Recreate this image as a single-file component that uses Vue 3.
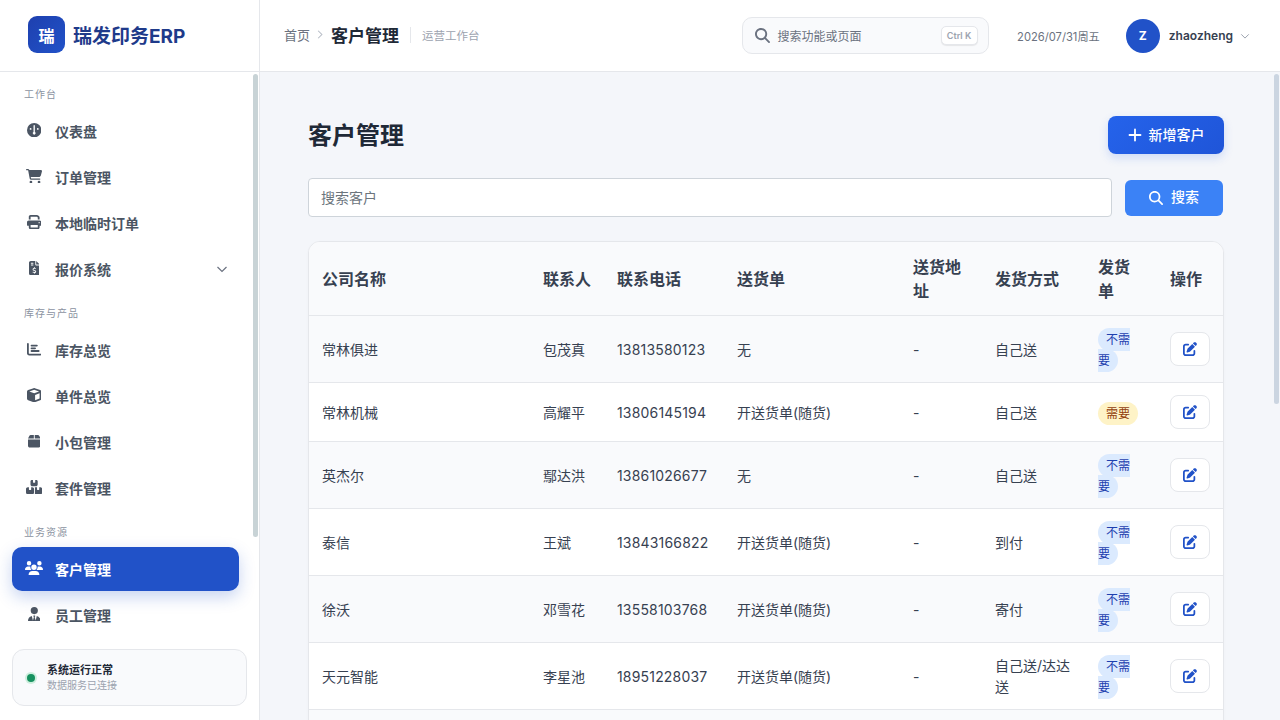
<script setup>
const icons = {
  gauge: { box: '0 0 512 512', d: 'M0 256a256 256 0 1 1 512 0A256 256 0 1 1 0 256zM280 96a24 24 0 0 0 -48 0V320a48 48 0 1 0 48 0zM160 210a32 32 0 1 0 -64 0 32 32 0 1 0 64 0zM416 210a32 32 0 1 0 -64 0 32 32 0 1 0 64 0z' },
  cart: { box: '0 0 576 512', d: 'M0 24C0 10.7 10.7 0 24 0H69.5c22 0 41.5 12.8 50.6 32h411c26.3 0 45.5 25 38.6 50.4l-41 152.3c-8.5 31.4-37 53.3-69.5 53.3H170.7l5.4 28.5c2.2 11.3 12.1 19.5 23.6 19.5H488c13.3 0 24 10.7 24 24s-10.7 24-24 24H199.7c-34.6 0-64.3-24.6-70.7-58.5L77.4 54.5c-.7-3.8-4-6.5-7.9-6.5H24C10.7 48 0 37.3 0 24zM128 464a48 48 0 1 1 96 0 48 48 0 1 1 -96 0zm336-48a48 48 0 1 1 0 96 48 48 0 1 1 0-96z' },
  print: { box: '0 0 512 512', d: 'M128 0C92.7 0 64 28.7 64 64v96h64V64H354.7L384 93.3V160h64V93.3c0-17-6.7-33.3-18.7-45.3L400 18.7C388 6.7 371.7 0 354.7 0H128zM384 352v32 64H128V384 368 352H384zm64 32h32c17.7 0 32-14.3 32-32V256c0-35.3-28.7-64-64-64H64c-35.3 0-64 28.7-64 64v96c0 17.7 14.3 32 32 32H64v64c0 35.3 28.7 64 64 64H384c35.3 0 64-28.7 64-64V384zM432 248a24 24 0 1 1 0 48 24 24 0 1 1 0-48z' },
  invoice: { box: '0 0 384 512', d: 'M64 0C28.7 0 0 28.7 0 64V448c0 35.3 28.7 64 64 64H320c35.3 0 64-28.7 64-64V160H256c-17.7 0-32-14.3-32-32V0H64zM256 0V128H384L256 0zM64 80c0-8.8 7.2-16 16-16h64c8.8 0 16 7.2 16 16s-7.2 16-16 16H80c-8.8 0-16-7.2-16-16zm0 64c0-8.8 7.2-16 16-16h64c8.8 0 16 7.2 16 16s-7.2 16-16 16H80c-8.8 0-16-7.2-16-16zm128 72c8.8 0 16 7.2 16 16v17.3c8.5 1.2 16.7 3.1 24.1 5.1c8.5 2.3 13.6 11 11.3 19.6s-11 13.6-19.6 11.3c-11.1-3-22-5.2-32.1-5.3c-8.4-.1-17.4 1.8-23.6 5.5c-5.7 3.4-8.1 7.3-8.1 12.8c0 3.7 1.3 6.5 7.3 10.1c6.9 4.1 16.6 7.1 29.2 10.9l.5 .1 0 0 0 0c11.3 3.4 25.3 7.6 36.3 14.6c12.1 7.6 22.4 19.7 22.7 38.2c.3 19.3-9.6 33.3-22.9 41.6c-7.7 4.8-16.4 7.6-25.1 9.1V440c0 8.8-7.2 16-16 16s-16-7.2-16-16V422.2c-11.2-2.1-21.7-5.7-30.9-8.9l0 0c-2.1-.7-4.2-1.4-6.2-2.1c-8.4-2.8-12.9-11.9-10.1-20.2s11.9-12.9 20.2-10.1c2.5 .8 4.8 1.6 7.1 2.4l0 0 0 0 0 0c13.6 4.6 24.6 8.4 36.3 8.7c9.1 .3 17.9-1.7 23.7-5.3c5.1-3.2 7.9-7.3 7.8-14c-.1-4.6-1.8-7.8-7.7-11.6c-6.8-4.3-16.5-7.4-29-11.2l-1.6-.5 0 0c-11-3.3-24.3-7.3-34.8-13.7c-12-7.2-22.6-18.9-22.7-37.3c-.1-19.4 10.8-32.8 23.8-40.5c7.5-4.4 15.8-7.2 24.1-8.7V232c0-8.8 7.2-16 16-16z' },
  chart: { box: '0 0 512 512', d: 'M32 32c17.7 0 32 14.3 32 32V400c0 8.8 7.2 16 16 16H480c17.7 0 32 14.3 32 32s-14.3 32-32 32H80c-44.2 0-80-35.8-80-80V64C0 46.3 14.3 32 32 32zm96 96c0-17.7 14.3-32 32-32l192 0c17.7 0 32 14.3 32 32s-14.3 32-32 32l-192 0c-17.7 0-32-14.3-32-32zm32 64H288c17.7 0 32 14.3 32 32s-14.3 32-32 32H160c-17.7 0-32-14.3-32-32s14.3-32 32-32zm0 96H416c17.7 0 32 14.3 32 32s-14.3 32-32 32H160c-17.7 0-32-14.3-32-32s14.3-32 32-32z' },
  cube: { box: '0 0 512 512', d: 'M234.5 5.7c13.9-5 29.1-5 43.1 0l192 68.6C495 83.4 512 107.5 512 134.6V377.4c0 27-17 51.2-42.5 60.3l-192 68.6c-13.9 5-29.1 5-43.1 0l-192-68.6C17 428.6 0 404.5 0 377.4V134.6c0-27 17-51.2 42.5-60.3l192-68.6zM256 66L82.3 128 256 190l173.7-62L256 66zm32 368.6l160-57.1v-188L288 246.6v188z' },
  box: { box: '0 0 448 512', d: 'M50.7 58.5L0 160H208V32H93.7C75.5 32 58.9 42.3 50.7 58.5zM240 160H448L397.3 58.5C389.1 42.3 372.5 32 354.3 32H240V160zm208 32H0V416c0 35.3 28.7 64 64 64H384c35.3 0 64-28.7 64-64V192z' },
  boxes: { box: '0 0 576 512', d: 'M248 0H208c-26.5 0-48 21.5-48 48V160c0 35.3 28.7 64 64 64H352c35.3 0 64-28.7 64-64V48c0-26.5-21.5-48-48-48H328V80c0 8.8-7.2 16-16 16H264c-8.8 0-16-7.2-16-16V0zM64 256c-35.3 0-64 28.7-64 64V448c0 35.3 28.7 64 64 64H224c35.3 0 64-28.7 64-64V320c0-35.3-28.7-64-64-64H184v80c0 8.8-7.2 16-16 16H120c-8.8 0-16-7.2-16-16V256H64zM352 512H512c35.3 0 64-28.7 64-64V320c0-35.3-28.7-64-64-64H472v80c0 8.8-7.2 16-16 16H408c-8.8 0-16-7.2-16-16V256H352c-15 0-28.8 5.1-39.7 13.8c4.9 10.4 7.7 22 7.7 34.2V464c0 12.2-2.8 23.8-7.7 34.2C323.2 506.9 337 512 352 512z' },
  users: { box: '0 0 640 512', d: 'M144 0a80 80 0 1 1 0 160A80 80 0 1 1 144 0zM512 0a80 80 0 1 1 0 160A80 80 0 1 1 512 0zM0 298.7C0 239.8 47.8 192 106.7 192h42.7c15.9 0 31 3.5 44.6 9.7c-1.3 7.2-1.9 14.7-1.9 22.3c0 38.2 16.8 72.5 43.3 96c-.2 0-.4 0-.7 0H21.3C9.6 320 0 310.4 0 298.7zM405.3 320c-.2 0-.4 0-.7 0c26.6-23.5 43.3-57.8 43.3-96c0-7.6-.7-15-1.9-22.3c13.6-6.3 28.7-9.7 44.6-9.7h42.7C592.2 192 640 239.8 640 298.7c0 11.8-9.6 21.3-21.3 21.3H405.3zM224 224a96 96 0 1 1 192 0 96 96 0 1 1 -192 0zM128 485.3C128 411.7 187.7 352 261.3 352H378.7C452.3 352 512 411.7 512 485.3c0 14.7-11.9 26.7-26.7 26.7H154.7c-14.7 0-26.7-11.9-26.7-26.7z' },
  tie: { box: '0 0 448 512', d: 'M96 128a128 128 0 1 0 256 0A128 128 0 1 0 96 128zm94.5 200.2l18.6 31L175.8 483.1l-36-146.9c-2-8.1-9.8-13.4-17.9-11.3C51.9 342.4 0 405.8 0 481.3c0 17 13.8 30.7 30.7 30.7H162.5c0 0 0 0 .1 0H168 280h5.5c0 0 0 0 .1 0H417.3c17 0 30.7-13.8 30.7-30.7c0-75.5-51.9-138.9-121.9-156.4c-8.1-2-15.9 3.3-17.9 11.3l-36 146.9L238.9 359.2l18.6-31c6.4-10.7-1.3-24.2-13.7-24.2H224 204.3c-12.4 0-20.1 13.6-13.7 24.2z' }
};

const searchPath = 'M416 208c0 45.9-14.9 88.3-40 122.7L502.6 457.4c12.5 12.5 12.5 32.8 0 45.3s-32.8 12.5-45.3 0L330.7 376c-34.4 25.2-76.8 40-122.7 40C93.1 416 0 322.9 0 208S93.1 0 208 0S416 93.1 416 208zM208 352a144 144 0 1 0 0-288 144 144 0 1 0 0 288z';
const editPath = 'M471.6 21.7c-21.9-21.9-57.3-21.9-79.2 0L362.3 51.7l97.9 97.9 30.1-30.1c21.9-21.9 21.9-57.3 0-79.2L471.6 21.7zm-299.2 220c-6.1 6.1-10.8 13.6-13.5 21.9l-29.6 88.8c-2.9 8.6-.6 18.1 5.8 24.6s15.9 8.7 24.6 5.8l88.8-29.6c8.2-2.7 15.7-7.4 21.9-13.5L437.7 172.3 339.7 74.3 172.4 241.7zM96 64C43 64 0 107 0 160V416c0 53 43 96 96 96H352c53 0 96-43 96-96V320c0-17.7-14.3-32-32-32s-32 14.3-32 32v96c0 17.7-14.3 32-32 32H96c-17.7 0-32-14.3-32-32V160c0-17.7 14.3-32 32-32h96c17.7 0 32-14.3 32-32s-14.3-32-32-32H96z';

const navGroups = [
  { title: '工作台', items: [
    { label: '仪表盘', icon: 'gauge' },
    { label: '订单管理', icon: 'cart' },
    { label: '本地临时订单', icon: 'print' },
    { label: '报价系统', icon: 'invoice', arrow: true }
  ] },
  { title: '库存与产品', items: [
    { label: '库存总览', icon: 'chart' },
    { label: '单件总览', icon: 'cube' },
    { label: '小包管理', icon: 'box' },
    { label: '套件管理', icon: 'boxes' }
  ] },
  { title: '业务资源', items: [
    { label: '客户管理', icon: 'users', active: true },
    { label: '员工管理', icon: 'tie' }
  ] }
];

const columns = ['公司名称', '联系人', '联系电话', '送货单', '送货地址', '发货方式', '发货单', '操作'];

const customers = [
  { name: '常林俱进', contact: '包茂真', phone: '13813580123', note: '无', addr: '-', ship: '自己送', need: false },
  { name: '常林机械', contact: '高耀平', phone: '13806145194', note: '开送货单(随货)', addr: '-', ship: '自己送', need: true },
  { name: '英杰尔', contact: '鄢达洪', phone: '13861026677', note: '无', addr: '-', ship: '自己送', need: false },
  { name: '泰信', contact: '王斌', phone: '13843166822', note: '开送货单(随货)', addr: '-', ship: '到付', need: false },
  { name: '徐沃', contact: '邓雪花', phone: '13558103768', note: '开送货单(随货)', addr: '-', ship: '寄付', need: false },
  { name: '天元智能', contact: '李星池', phone: '18951228037', note: '开送货单(随货)', addr: '-', ship: '自己送/达达送', need: false }
];
</script>

<template>
  <div class="app">
    <aside class="sidebar">
      <div class="brand">
        <div class="brand-mark">瑞</div>
        <div class="brand-name">瑞发印务ERP</div>
      </div>
      <nav class="nav">
        <template v-for="group in navGroups" :key="group.title">
          <div class="nav-title">{{ group.title }}</div>
          <a v-for="item in group.items" :key="item.label" class="nav-item" :class="{ active: item.active }">
            <span class="nav-icon">
              <svg :viewBox="icons[item.icon].box" height="14.4" fill="currentColor"><path :d="icons[item.icon].d" /></svg>
            </span>
            <span class="nav-label">{{ item.label }}</span>
            <svg v-if="item.arrow" class="nav-arrow" viewBox="0 0 12 12" width="12" height="12" fill="none" stroke="currentColor" stroke-width="1.2"><path d="M1.5 4l4.5 4.5L10.5 4" /></svg>
          </a>
        </template>
      </nav>
      <div class="status-card">
        <span class="status-dot"></span>
        <div>
          <div class="status-title">系统运行正常</div>
          <div class="status-sub">数据服务已连接</div>
        </div>
      </div>
      <div class="nav-thumb"></div>
    </aside>

    <div class="right">
      <header class="topbar">
        <div class="crumbs">
          <span class="crumb-home">首页</span>
          <svg class="crumb-sep" viewBox="0 0 8 12" width="6" height="9" fill="none" stroke="currentColor" stroke-width="1.4"><path d="M1.5 1l5 5-5 5" /></svg>
          <span class="crumb-current">客户管理</span>
          <span class="crumb-line"></span>
          <span class="crumb-sub">运营工作台</span>
        </div>
        <div class="top-search">
          <svg viewBox="0 0 512 512" width="15" height="15" fill="currentColor"><path :d="searchPath" /></svg>
          <span class="top-search-text">搜索功能或页面</span>
          <kbd class="kbd">Ctrl K</kbd>
        </div>
        <div class="date">2026/07/31周五</div>
        <div class="user">
          <div class="avatar">Z</div>
          <span class="user-name">zhaozheng</span>
          <svg class="user-arrow" viewBox="0 0 12 12" width="10" height="10" fill="none" stroke="currentColor" stroke-width="1.2"><path d="M1.5 4l4.5 4.5L10.5 4" /></svg>
        </div>
      </header>

      <main class="main">
        <div class="page-head">
          <h1 class="page-title">客户管理</h1>
          <button class="btn-add">
            <svg viewBox="0 0 14 14" width="14" height="14" fill="none" stroke="currentColor" stroke-width="1.8" stroke-linecap="round"><path d="M7 1.5v11M1.5 7h11" /></svg>
            <span>新增客户</span>
          </button>
        </div>

        <div class="search-row">
          <input class="search-input" type="text" placeholder="搜索客户" />
          <button class="btn-search">
            <svg viewBox="0 0 512 512" width="14" height="14" fill="currentColor"><path :d="searchPath" /></svg>
            <span>搜索</span>
          </button>
        </div>

        <div class="table-card">
          <table class="table">
            <colgroup>
              <col style="width: 221px" />
              <col style="width: 74px" />
              <col style="width: 120px" />
              <col style="width: 176px" />
              <col style="width: 82px" />
              <col style="width: 103px" />
              <col style="width: 72px" />
              <col style="width: 66px" />
            </colgroup>
            <thead>
              <tr>
                <th v-for="col in columns" :key="col">{{ col }}</th>
              </tr>
            </thead>
            <tbody>
              <tr v-for="row in customers" :key="row.name">
                <td>{{ row.name }}</td>
                <td>{{ row.contact }}</td>
                <td class="cell-phone">{{ row.phone }}</td>
                <td>{{ row.note }}</td>
                <td>{{ row.addr }}</td>
                <td>{{ row.ship }}</td>
                <td class="cell-badge"><span class="badge" :class="row.need ? 'badge-yes' : 'badge-no'">{{ row.need ? '需要' : '不需要' }}</span></td>
                <td>
                  <button class="btn-edit">
                    <svg viewBox="0 0 512 512" width="14" height="14" fill="currentColor"><path :d="editPath" /></svg>
                  </button>
                </td>
              </tr>
              <tr class="row-more"><td colspan="8"></td></tr>
            </tbody>
          </table>
        </div>
        <div class="main-thumb"></div>
      </main>
    </div>
  </div>
</template>

<style>
html, body {
  margin: 0;
  height: 100%;
  overflow: hidden;
}
</style>

<style scoped>
.app {
  display: flex;
  height: 720px;
  overflow: hidden;
  font-family: Inter, "Noto Sans CJK SC", sans-serif;
  color: #374151;
  background: #f4f6fa;
}

/* sidebar */
.sidebar {
  position: relative;
  width: 260px;
  flex-shrink: 0;
  display: flex;
  flex-direction: column;
  box-sizing: border-box;
  background: #fff;
  border-right: 1px solid #e5e7eb;
}
.brand {
  height: 72px;
  flex-shrink: 0;
  box-sizing: border-box;
  display: flex;
  align-items: center;
  gap: 8px;
  padding: 0 0 2px 28px;
  border-bottom: 1px solid #e5e7eb;
}
.brand-mark {
  width: 37px;
  height: 37px;
  border-radius: 9px;
  display: flex;
  align-items: center;
  justify-content: center;
  background: linear-gradient(135deg, #1e40af, #2152c8);
  color: #fff;
  font-size: 16px;
  font-weight: 700;
}
.brand-name {
  font-size: 19px;
  font-weight: 700;
  color: #1e3a8a;
}
.nav {
  flex: 1;
  min-height: 0;
  overflow: hidden;
  display: flex;
  flex-direction: column;
  gap: 2px;
  padding: 2px 20px 0 12px;
}
.nav-thumb {
  position: absolute;
  top: 74px;
  right: 1px;
  width: 5px;
  height: 463px;
  border-radius: 3px;
  background: #c8d3d6;
}
.nav-title {
  flex-shrink: 0;
  padding: 13px 12px 5px;
  font-size: 10px;
  line-height: 15px;
  letter-spacing: 1px;
  color: #8b93a1;
}
.nav-item {
  flex-shrink: 0;
  height: 44px;
  display: flex;
  align-items: center;
  padding: 0 11px 0 13px;
  border-radius: 10px;
  color: #4b5563;
  font-size: 14px;
  font-weight: 600;
}
.nav-item.active {
  background: #2152c8;
  color: #fff;
  box-shadow: 0 6px 16px rgba(33, 82, 200, 0.25);
}
.nav-icon {
  width: 18px;
  display: flex;
  justify-content: center;
  margin: -2px 12px 0 0;
}
.nav-label {
  flex: 1;
}
.nav-arrow {
  color: #6b7280;
}
.status-card {
  flex-shrink: 0;
  display: flex;
  align-items: center;
  gap: 12px;
  height: 57px;
  box-sizing: border-box;
  margin: 9px 12px 14px;
  padding: 0 14px;
  background: #f9fafc;
  border: 1px solid #e5e7eb;
  border-radius: 12px;
}
.status-dot {
  width: 8px;
  height: 8px;
  border-radius: 50%;
  background: #16915f;
  box-shadow: 0 0 0 2px #cdeedd;
}
.status-title {
  font-size: 11px;
  font-weight: 600;
  line-height: 15px;
  color: #1f2937;
}
.status-sub {
  font-size: 10px;
  line-height: 15px;
  color: #9ca3af;
}

/* top bar */
.right {
  flex: 1;
  min-width: 0;
  display: flex;
  flex-direction: column;
}
.topbar {
  height: 72px;
  flex-shrink: 0;
  box-sizing: border-box;
  display: flex;
  align-items: center;
  padding: 0 30px 0 24px;
  background: #fff;
  border-bottom: 1px solid #e5e7eb;
}
.crumbs {
  flex: 1;
  display: flex;
  align-items: center;
  margin-top: -2px;
}
.crumb-home {
  font-size: 13px;
  color: #6b7280;
}
.crumb-sep {
  margin: 0 8px 0 7px;
  color: #b6bcc6;
}
.crumb-current {
  font-size: 17px;
  font-weight: 700;
  color: #1f2937;
}
.crumb-line {
  width: 1px;
  height: 16px;
  margin: 0 11px;
  background: #e5e7eb;
}
.crumb-sub {
  font-size: 11.5px;
  color: #9ca3af;
}
.top-search {
  width: 247px;
  height: 37px;
  box-sizing: border-box;
  display: flex;
  align-items: center;
  padding: 0 10px 0 12px;
  background: #f9fafc;
  border: 1px solid #e5e7eb;
  border-radius: 10px;
  color: #6b7280;
}
.top-search-text {
  flex: 1;
  margin-left: 8px;
  font-size: 12px;
}
.kbd {
  height: 19px;
  width: 37px;
  box-sizing: border-box;
  display: flex;
  align-items: center;
  justify-content: center;
  background: #fff;
  border: 1px solid #e5e7eb;
  border-radius: 5px;
  box-shadow: 0 1px 1px rgba(0, 0, 0, 0.08);
  font-family: inherit;
  font-size: 9px;
  font-weight: 600;
  color: #9ca3af;
}
.date {
  margin-left: 28.5px;
  font-size: 11.2px;
  color: #6b7280;
}
.user {
  display: flex;
  align-items: center;
  margin-left: 26px;
}
.avatar {
  width: 34px;
  height: 34px;
  border-radius: 50%;
  display: flex;
  align-items: center;
  justify-content: center;
  background: #2152c8;
  color: #fff;
  font-size: 12px;
  font-weight: 700;
}
.user-name {
  margin-left: 9px;
  font-size: 12px;
  font-weight: 600;
  color: #374151;
}
.user-arrow {
  margin-left: 7px;
  color: #9ca3af;
}

/* content */
.main {
  position: relative;
  flex: 1;
  min-height: 0;
  overflow: hidden;
  box-sizing: border-box;
  padding: 44px 56px 0 48px;
}
.main-thumb {
  position: absolute;
  top: 2px;
  right: 1px;
  width: 5px;
  height: 330px;
  border-radius: 3px;
  background: #cbd5e1;
}
.page-head {
  display: flex;
  align-items: center;
  justify-content: space-between;
  height: 38px;
}
.page-title {
  margin: 0 0 4px;
  font-size: 24px;
  font-weight: 700;
  color: #1f2937;
}
.btn-add {
  width: 116px;
  height: 38px;
  display: flex;
  align-items: center;
  justify-content: center;
  gap: 7px;
  border: 0;
  border-radius: 8px;
  background: linear-gradient(135deg, #2563eb, #1f55d8);
  box-shadow: 0 4px 10px rgba(37, 99, 235, 0.18);
  color: #fff;
  font: inherit;
  font-size: 14px;
  font-weight: 500;
}
.btn-add span,
.btn-search span {
  margin-top: -3px;
}
.search-row {
  display: flex;
  align-items: center;
  gap: 13px;
  margin-top: 24px;
}
.search-input {
  flex: 1;
  min-width: 0;
  height: 39px;
  box-sizing: border-box;
  padding: 0 12px;
  background: #fff;
  border: 1px solid #ced4da;
  border-radius: 4px;
  font: inherit;
  font-size: 14px;
  outline: none;
}
.search-input::placeholder {
  color: #6c757d;
}
.btn-search {
  width: 98px;
  height: 36px;
  margin-right: 1px;
  flex-shrink: 0;
  display: flex;
  align-items: center;
  justify-content: center;
  gap: 8px;
  border: 0;
  border-radius: 6px;
  background: #3b82f6;
  color: #fff;
  font: inherit;
  font-size: 14px;
  font-weight: 500;
}
.table-card {
  margin-top: 24px;
  background: #fff;
  border: 1px solid #e5e7eb;
  border-radius: 12px;
  overflow: hidden;
  box-shadow: 0 1px 3px rgba(0, 0, 0, 0.03);
}
.table {
  width: 100%;
  table-layout: fixed;
  border-collapse: collapse;
}
.table th {
  padding: 13px 13px 12px;
  background: #f9fafc;
  border-bottom: 1px solid #e5e7eb;
  font-size: 16px;
  font-weight: 600;
  line-height: 24px;
  text-align: left;
  color: #374151;
}
.table td {
  padding: 12px 13px;
  border-bottom: 1px solid #e5e7eb;
  font-size: 14px;
  line-height: 21px;
  color: #374151;
  vertical-align: middle;
}
.table td.cell-badge {
  padding: 13px 13px 11px;
  font-size: 12px;
}
.table td.cell-phone {
  letter-spacing: 0.18px;
}
.table tbody tr:nth-child(odd) td {
  background: #f9fafc;
}
.row-more td {
  height: 60px;
}
.badge {
  padding: 4px 8px;
  border-radius: 999px;
  font-weight: 400;
}
.badge-no {
  background: #dbeafe;
  color: #1e40af;
}
.badge-yes {
  background: #fef3c7;
  color: #92400e;
}
.btn-edit {
  width: 40px;
  height: 34px;
  display: flex;
  align-items: center;
  justify-content: center;
  padding: 0;
  background: #fff;
  border: 1px solid #e5e7eb;
  border-radius: 8px;
  color: #2152c8;
}
</style>
